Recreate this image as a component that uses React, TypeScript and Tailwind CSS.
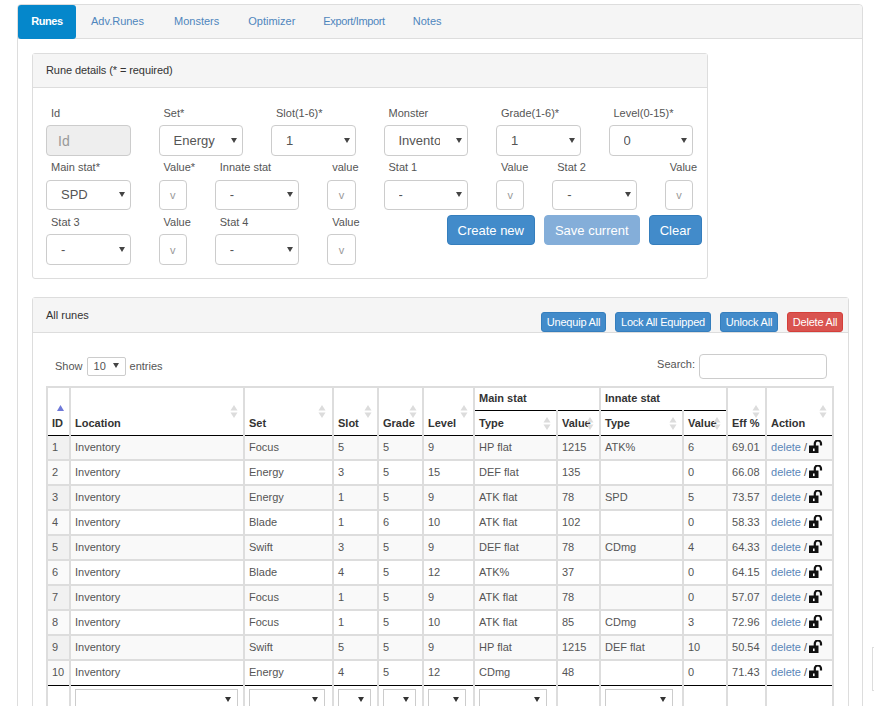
import React from "react";

const Arrow = () => (
  <svg className="absolute right-[6px] top-1/2 -mt-[3px] pointer-events-none" width="6" height="5" viewBox="0 0 6 5">
    <path d="M0 0h6L3 5z" fill="#444" />
  </svg>
);

function Sel({ value, cls = "" }: { value: string; cls?: string }) {
  return (
    <div className={"relative " + cls}>
      <select
        defaultValue={value}
        className="block w-full h-full appearance-none bg-white border border-[#ccc] rounded-[4px] pl-[14px] pr-[27px] text-[13px] text-[#555] outline-none"
      >
        <option>{value}</option>
      </select>
      <Arrow />
    </div>
  );
}

function Field({ label, span, value, h = "h-[31px]", gap = "mb-[4px]" }: { label: string; span: string; value: string; h?: string; gap?: string }) {
  return (
    <div className={span}>
      <div className={"pl-[5px] h-[15px] leading-[15px] text-[11px] text-[#555] whitespace-nowrap " + gap}>{label}</div>
      <Sel value={value} cls={h} />
    </div>
  );
}

function Val({ label, h = "h-[30px]", span = "col-span-1", gap = "mb-[4px]" }: { label: string; h?: string; span?: string; gap?: string }) {
  return (
    <div className={span}>
      <div className={"pl-[5px] h-[15px] leading-[15px] text-[11px] text-[#555] whitespace-nowrap " + gap}>{label}</div>
      <input
        placeholder="v"
        className={"block w-full border border-[#ccc] rounded-[4px] bg-white text-center text-[11px] placeholder:text-[#999] outline-none " + h}
      />
    </div>
  );
}

function Btn({ children, cls }: { children: React.ReactNode; cls: string }) {
  return (
    <button className={"h-[30px] rounded-[4px] border text-white text-[13px] leading-none whitespace-nowrap " + cls}>{children}</button>
  );
}

function SmallBtn({ children, cls }: { children: React.ReactNode; cls: string }) {
  return (
    <button className={"h-[20px] rounded-[3px] border text-white text-[11px] tracking-[-0.2px] leading-none whitespace-nowrap " + cls}>{children}</button>
  );
}

const Sort = ({ cls }: { cls: string }) => (
  <svg className={"absolute " + cls} width="8" height="13" viewBox="0 0 8 13">
    <path d="M4 0l3.5 5.5h-7z" fill="#dcdcdc" />
    <path d="M4 13L.5 7.5h7z" fill="#dcdcdc" />
  </svg>
);

const Lock = () => (
  <svg className="inline-block align-[-2px] ml-[2px]" width="14" height="13" viewBox="0 0 14 13">
    <rect x="0" y="5.5" width="9.5" height="7.5" fill="#111" />
    <rect x="4" y="8.5" width="1.6" height="2.6" fill="#fff" />
    <path d="M5.8 6V3.6a3.1 3.1 0 0 1 6.2 0v2" fill="none" stroke="#111" strokeWidth="2.2" />
  </svg>
);

const rows = [
  ["1", "Focus", "5", "5", "9", "HP flat", "1215", "ATK%", "6", "69.01"],
  ["2", "Energy", "3", "5", "15", "DEF flat", "135", "", "0", "66.08"],
  ["3", "Energy", "1", "5", "9", "ATK flat", "78", "SPD", "5", "73.57"],
  ["4", "Blade", "1", "6", "10", "ATK flat", "102", "", "0", "58.33"],
  ["5", "Swift", "3", "5", "9", "DEF flat", "78", "CDmg", "4", "64.33"],
  ["6", "Blade", "4", "5", "12", "ATK%", "37", "", "0", "64.15"],
  ["7", "Focus", "1", "5", "9", "ATK flat", "78", "", "0", "57.07"],
  ["8", "Focus", "1", "5", "10", "ATK flat", "85", "CDmg", "3", "72.96"],
  ["9", "Swift", "5", "5", "9", "HP flat", "1215", "DEF flat", "10", "50.54"],
  ["10", "Energy", "4", "5", "12", "CDmg", "48", "", "0", "71.43"],
];

const th = "relative border-2 border-[#ddd] border-b border-b-black text-left align-bottom font-bold text-[#333] pl-[4px] pb-[3px] whitespace-nowrap";
const thTop = "relative border-2 border-[#ddd] border-b border-b-black text-left font-bold text-[#333] pl-[4px] pb-[2px]";
const thSub = "relative border-2 border-[#ddd] border-t border-t-black border-b border-b-black text-left align-bottom font-bold text-[#333] pl-[4px] pb-[3px] whitespace-nowrap";
const td = "border-2 border-[#ddd] pl-[4px] h-[25px] whitespace-nowrap";
const edge = (i: number) => (i === 0 ? " border-t border-t-black" : i === 9 ? " border-b border-b-black pb-[2px]" : "");
const ft = "border-2 border-[#ddd] border-t border-t-black";
const ftS = "border-2 border-[#ddd] border-t border-t-black pl-[4px] align-top pt-[3px]";

const FootSel = ({ cls }: { cls: string }) => (
  <div className={"relative h-[24px] bg-white border border-[#ccc] " + cls}>
    <svg className="absolute right-[6px] top-[7px]" width="6" height="5" viewBox="0 0 6 5">
      <path d="M0 0h6L3 5z" fill="#333" />
    </svg>
  </div>
);

export default function App() {
  return (
    <div className="relative w-[874px] h-[706px] overflow-hidden bg-white pl-[17px] pt-[4px] font-['Liberation_Sans',Arial,sans-serif] text-[11px] text-[#333]">
      <div className="w-[846px] border border-[#ddd] rounded-[4px] min-h-[800px]">
        <div className="flex h-[34px] bg-[#f5f5f5] border-b border-[#ddd] rounded-t-[4px] text-[11px] leading-[33px] text-[#4f86bd]">
          <div className="w-[58px] h-[34px] text-center bg-[#0587cb] text-white font-bold tracking-[-0.4px] rounded-[3px]">Runes</div>
          <div className="ml-[15px]">Adv.Runes</div>
          <div className="ml-[30px]">Monsters</div>
          <div className="ml-[29px]">Optimizer</div>
          <div className="ml-[28px] tracking-[-0.35px]">Export/Import</div>
          <div className="ml-[28px]">Notes</div>
        </div>

        <div className="pt-[14px] pl-[14px] pr-[14px]">
          <section className="w-[676px] h-[226px] border border-[#ddd] rounded-[3px]">
            <div className="h-[34px] bg-[#f5f5f5] border-b border-[#ddd] pl-[13px] leading-[33px] text-[11px] tracking-[-0.08px]">Rune details (* = required)</div>
            <div className="grid grid-cols-[repeat(12,28.25px)] gap-x-[28px] gap-y-[5px] pl-[13px] pt-[18px]">
              <div className="col-span-2">
                <div className="pl-[5px] h-[15px] leading-[15px] text-[11px] text-[#555] mb-[4px]">Id</div>
                <input disabled placeholder="Id" className="block w-full h-[31px] bg-[#eee] border border-[#ccc] rounded-[4px] pl-[11px] text-[14px] placeholder:text-[#999]" />
              </div>
              <Field label="Set*" span="col-span-2" value="Energy" />
              <Field label="Slot(1-6)*" span="col-span-2" value="1" />
              <Field label="Monster" span="col-span-2" value="Inventory" />
              <Field label="Grade(1-6)*" span="col-span-2" value="1" />
              <Field label="Level(0-15)*" span="col-span-2" value="0" />

              <Field label="Main stat*" span="col-span-2 -mt-[1px]" gap="mb-[5px]" value="SPD" h="h-[30px]" />
              <Val label="Value*" span="col-span-1 -mt-[1px]" gap="mb-[5px]" />
              <Field label="Innate stat" span="col-span-2 -mt-[1px]" gap="mb-[5px]" value="-" h="h-[30px]" />
              <Val label="value" span="col-span-1 -mt-[1px]" gap="mb-[5px]" />
              <Field label="Stat 1" span="col-span-2 -mt-[1px]" gap="mb-[5px]" value="-" h="h-[30px]" />
              <Val label="Value" span="col-span-1 -mt-[1px]" gap="mb-[5px]" />
              <Field label="Stat 2" span="col-span-2 -mt-[1px]" gap="mb-[5px]" value="-" h="h-[30px]" />
              <Val label="Value" span="col-span-1 -mt-[1px]" gap="mb-[5px]" />

              <Field label="Stat 3" span="col-span-2" value="-" />
              <Val label="Value" h="h-[31px]" />
              <Field label="Stat 4" span="col-span-2" value="-" />
              <Val label="Value" h="h-[31px]" />
              <div className="col-start-8 col-span-5 ml-[7px] flex gap-[9px] items-start whitespace-nowrap">
                <Btn cls="w-[88px] shrink-0 bg-[#428bca] border-[#357ebd]">Create new</Btn>
                <Btn cls="w-[96px] shrink-0 bg-[#84aed9] border-[#84aed9]">Save current</Btn>
                <Btn cls="w-[53px] shrink-0 bg-[#428bca] border-[#357ebd]">Clear</Btn>
              </div>
            </div>
          </section>

          <section className="mt-[18px] w-[817px] border border-[#ddd] rounded-[3px]">
            <div className="flex justify-between h-[35px] bg-[#f5f5f5] border-b border-[#ddd] pl-[13px] pr-[5px]">
              <div className="leading-[34px] text-[11px]">All runes</div>
              <div className="flex items-end gap-[9px]">
                <SmallBtn cls="w-[65px] bg-[#428bca] border-[#357ebd]">Unequip All</SmallBtn>
                <SmallBtn cls="w-[96px] bg-[#428bca] border-[#357ebd]">Lock All Equipped</SmallBtn>
                <SmallBtn cls="w-[58px] bg-[#428bca] border-[#357ebd]">Unlock All</SmallBtn>
                <SmallBtn cls="w-[56px] bg-[#d9534f] border-[#d43f3a]">Delete All</SmallBtn>
              </div>
            </div>
            <div className="pl-[13px]">
              <div className="flex justify-between items-center h-[53px] pt-[13px] pl-[9px] pr-[21px] text-[#555] text-[11px]">
                <div className="flex items-center">
                  <span>Show</span>
                  <div className="relative w-[39px] h-[19px] mx-[4px]">
                    <select defaultValue="10" className="block w-full h-full appearance-none bg-white border border-[#ccc] rounded-[2px] pl-[6px] text-[11px] text-[#555]">
                      <option>10</option>
                    </select>
                    <svg className="absolute right-[7px] top-[6px]" width="6" height="5" viewBox="0 0 6 5"><path d="M0 0h6L3 5z" fill="#444" /></svg>
                  </div>
                  <span>entries</span>
                </div>
                <div className="flex items-center">
                  <span className="mr-[4px] mb-[4px]">Search:</span>
                  <input className="w-[128px] h-[25px] border border-[#ccc] rounded-[4px] bg-white" />
                </div>
              </div>
              <table className="table-fixed w-[786px] border-collapse text-[11px] text-[#555]">
                <colgroup>
                  <col className="w-[23px]" /><col className="w-[174px]" /><col className="w-[89px]" /><col className="w-[45px]" />
                  <col className="w-[45px]" /><col className="w-[51px]" /><col className="w-[83px]" /><col className="w-[43px]" />
                  <col className="w-[83px]" /><col className="w-[44px]" /><col className="w-[39px]" /><col className="w-[67px]" />
                </colgroup>
                <thead>
                  <tr className="h-[23px]">
                    <th rowSpan={2} className={th}>
                      ID
                      <svg className="absolute left-[9px] top-[17px]" width="7" height="6" viewBox="0 0 7 6"><path d="M3.5 0L7 6H0z" fill="#6f79d8" /></svg>
                    </th>
                    <th rowSpan={2} className={th}>Location<Sort cls="right-[5px] top-[17px]" /></th>
                    <th rowSpan={2} className={th}>Set<Sort cls="right-[6px] top-[17px]" /></th>
                    <th rowSpan={2} className={th}>Slot<Sort cls="right-[5px] top-[17px]" /></th>
                    <th rowSpan={2} className={th}>Grade<Sort cls="right-[5px] top-[17px]" /></th>
                    <th rowSpan={2} className={th}>Level<Sort cls="right-[5px] top-[17px]" /></th>
                    <th colSpan={2} className={thTop}>Main stat</th>
                    <th colSpan={2} className={thTop}>Innate stat</th>
                    <th rowSpan={2} className={th}>Eff %<Sort cls="right-[5px] top-[17px]" /></th>
                    <th rowSpan={2} className={th}>Action<Sort cls="right-[5px] top-[17px]" /></th>
                  </tr>
                  <tr className="h-[25px]">
                    <th className={thSub}>Type<Sort cls="right-[5px] top-[6px]" /></th>
                    <th className={thSub}>Value<Sort cls="right-[5px] top-[6px]" /></th>
                    <th className={thSub}>Type<Sort cls="right-[5px] top-[6px]" /></th>
                    <th className={thSub}>Value<Sort cls="right-[5px] top-[6px]" /></th>
                  </tr>
                </thead>
                <tbody>
                  {rows.map((r, i) => (
                    <tr key={r[0]} className={i % 2 === 0 ? "bg-[#f9f9f9]" : "bg-white"}>
                      <td className={td + edge(i) + (i % 2 === 0 ? " bg-[#f1f1f1]" : " bg-[#fafafa]")}>{r[0]}</td>
                      <td className={td + edge(i)}>Inventory</td>
                      {r.slice(1).map((c, j) => (
                        <td key={j} className={td + edge(i)}>{c}</td>
                      ))}
                      <td className={td + edge(i)}>
                        <span className="text-[#5a86b8]">delete</span> /<Lock />
                      </td>
                    </tr>
                  ))}
                </tbody>
                <tfoot>
                  <tr className="h-[34px]">
                    <td className={ft} />
                    <td className={ftS}><FootSel cls="w-[163px]" /></td>
                    <td className={ftS}><FootSel cls="w-[76px]" /></td>
                    <td className={ftS}><FootSel cls="w-[33px]" /></td>
                    <td className={ftS}><FootSel cls="w-[33px]" /></td>
                    <td className={ftS}><FootSel cls="w-[38px]" /></td>
                    <td className={ftS}><FootSel cls="w-[68px]" /></td>
                    <td className={ft} />
                    <td className={ftS}><FootSel cls="w-[68px]" /></td>
                    <td className={ft} />
                    <td className={ft} />
                    <td className={ft} />
                  </tr>
                </tfoot>
              </table>
            </div>
          </section>
        </div>
      </div>
      <div className="absolute left-[872px] top-[647px] w-[10px] h-[44px] border border-[#ddd] bg-white" />
    </div>
  );
}
